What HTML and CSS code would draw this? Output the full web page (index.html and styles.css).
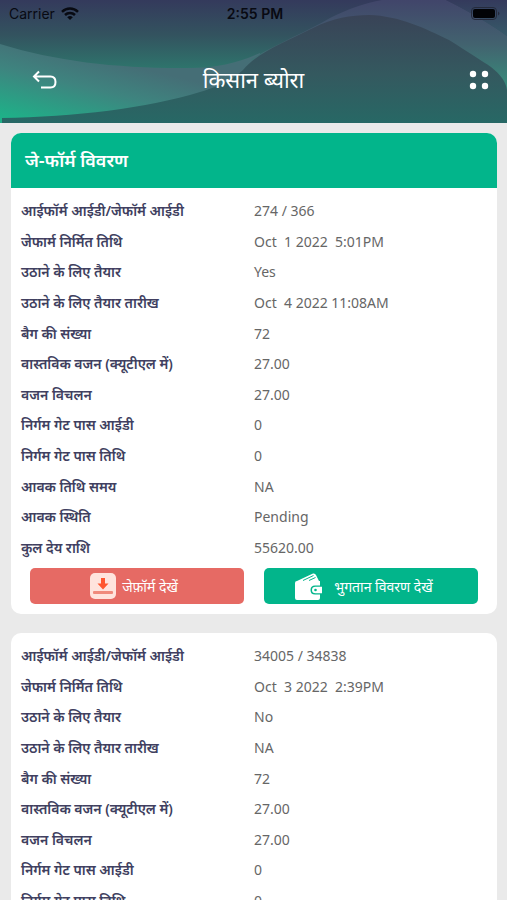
FILE: index.html
```html
<!DOCTYPE html>
<html lang="hi">
<head>
<meta charset="utf-8">
<meta name="viewport" content="width=device-width, initial-scale=1">
<title>किसान ब्योरा</title>
<link rel="stylesheet" href="styles.css">
</head>
<body>
<header class="top">
  <svg class="waves" viewBox="0 0 507 123" preserveAspectRatio="none" aria-hidden="true">
    <defs>
      <linearGradient id="sky" gradientUnits="userSpaceOnUse" x1="0" y1="0" x2="0" y2="70"><stop offset="0" stop-color="#343a5c"/><stop offset=".5" stop-color="#33535f"/><stop offset="1" stop-color="#2e766d"/></linearGradient>
      <linearGradient id="left" gradientUnits="userSpaceOnUse" x1="30" y1="42" x2="12" y2="118"><stop offset="0" stop-color="#456e76"/><stop offset=".4" stop-color="#3e847f"/><stop offset="1" stop-color="#1fb088"/></linearGradient>
      <linearGradient id="back" gradientUnits="userSpaceOnUse" x1="0" y1="0" x2="0" y2="90"><stop offset="0" stop-color="#41456a"/><stop offset=".5" stop-color="#42636f"/><stop offset="1" stop-color="#378f7c"/></linearGradient>
      <linearGradient id="right" gradientUnits="userSpaceOnUse" x1="0" y1="0" x2="0" y2="85"><stop offset="0" stop-color="#343a5c"/><stop offset=".5" stop-color="#37606b"/><stop offset="1" stop-color="#328f78"/></linearGradient>
      <linearGradient id="hill" gradientUnits="userSpaceOnUse" x1="0" y1="15" x2="0" y2="123"><stop offset="0" stop-color="#394357"/><stop offset=".55" stop-color="#34595f"/><stop offset="1" stop-color="#276865"/></linearGradient>
    </defs>
    <path fill="url(#sky)" d="M0 0H507V123H0Z"/>
    <path fill="url(#left)" d="M0 44C55 61 115 68 180 68C215 69 238 63 260 53V123H0Z"/>
    <path fill="url(#back)" d="M250 60C272 46 308 31 330 18C350 8 365 3 382 0H446C472 13 492 25 507 36V100L400 60Z"/>
    <path fill="url(#right)" d="M446 0H507V36C490 24 470 12 446 0Z"/>
    <path fill="url(#hill)" d="M2 118C75 117 147 108 200 92C224 85 234 78 243 70C258 52 285 42 313 28C333 18 351 15 369 15C400 16 424 28 449 40C468 52 482 61 491 67C501 75 506 82 507 90V123H2Z"/>
  </svg>
  <div class="status">
    <span class="carrier">Carrier
      <svg width="18" height="13" viewBox="0 0 18 13" aria-hidden="true"><g fill="none" stroke="#080a12" stroke-width="2.5"><path d="M1 4.800C5.500 .5 12.500 .5 17 4.800"/><path d="M4 8C6.800 5.300 11.200 5.300 14 8"/></g><path fill="#080a12" d="M6.200 10.200Q9 7.800 11.800 10.200L9 13Z"/></svg>
    </span>
    <time class="clock">2:55 PM</time>
    <svg class="battery" width="30" height="14" viewBox="0 0 30 14" aria-hidden="true"><rect x=".5" y=".5" width="25" height="12" rx="3.500" fill="none" stroke="#252b3c"/><rect x="2" y="2" width="22" height="9" rx="2" fill="#020306"/><path d="M27 4.500Q30 6.500 27 8.500Z" fill="#252b3c"/></svg>
  </div>
  <div class="bar">
    <button class="icon-button" type="button" aria-label="वापस"><svg width="26" height="20" viewBox="0 0 26 20" aria-hidden="true"><path d="M7 1.500L2 6.500L7 11.500M2 6.500H18.500Q23.500 6.500 23.500 12Q23.500 17.500 18.500 17.500H9" fill="none" stroke="#fff" stroke-width="2"/></svg></button>
    <h1>किसान ब्योरा</h1>
    <button class="icon-button" type="button" aria-label="मेनू"><svg width="20" height="20" viewBox="0 0 20 20" aria-hidden="true"><g fill="#fff"><circle cx="4" cy="4" r="3.200"/><circle cx="16" cy="4" r="3.200"/><circle cx="4" cy="16" r="3.200"/><circle cx="16" cy="16" r="3.200"/></g></svg></button>
  </div>
</header>
<main class="list">
  <section class="card">
    <h2>जे-फॉर्म विवरण</h2>
    <dl class="details">
      <dt>आईफॉर्म आईडी/जेफॉर्म आईडी</dt><dd>274 / 366</dd>
      <dt>जेफार्म निर्मित तिथि</dt><dd>Oct  1 2022  5:01PM</dd>
      <dt>उठाने के लिए तैयार</dt><dd>Yes</dd>
      <dt>उठाने के लिए तैयार तारीख</dt><dd>Oct  4 2022 11:08AM</dd>
      <dt>बैग की संख्या</dt><dd>72</dd>
      <dt>वास्तविक वजन (क्यूटीएल में)</dt><dd>27.00</dd>
      <dt>वजन विचलन</dt><dd>27.00</dd>
      <dt>निर्गम गेट पास आईडी</dt><dd>0</dd>
      <dt>निर्गम गेट पास तिथि</dt><dd>0</dd>
      <dt>आवक तिथि समय</dt><dd>NA</dd>
      <dt>आवक स्थिति</dt><dd>Pending</dd>
      <dt>कुल देय राशि</dt><dd>55620.00</dd>
    </dl>
    <div class="actions">
      <button class="action view" type="button"><svg width="26" height="26" viewBox="0 0 26 26" aria-hidden="true"><rect width="26" height="26" rx="5" fill="#ffe3dd"/><path d="M11 5H15V10.500H18.500L13 16.500L7.500 10.500H11Z" fill="#ff5630"/><rect x="3" y="18" width="20" height="3" rx="1" fill="#f08a7c"/></svg>जेफ़ॉर्म देखें</button>
      <button class="action pay" type="button"><svg width="27" height="27" viewBox="0 0 27 27" aria-hidden="true"><path d="M2 8L18 .5Q20 0 21 2L24 8H25V25Q25 27 23 27H2Q0 27 0 25V10Q0 8 2 8Z" fill="#fff"/><path d="M8 7.500L18.500 2.500M14 7.500L20.500 4.500" fill="none" stroke="#02b58b"/><path d="M27 12.500H20Q15.500 12.500 15.500 17Q15.500 21.500 20 21.500H27Z" fill="#02b58b"/><path d="M20.500 13.700H27V20.300H20.500Q17 20.300 17 17Q17 13.700 20.500 13.700Z" fill="#fff"/><circle cx="20.500" cy="17" r="1.300" fill="#02b58b"/></svg>भुगतान विवरण देखें</button>
    </div>
  </section>
  <section class="card">
    <dl class="details">
      <dt>आईफॉर्म आईडी/जेफॉर्म आईडी</dt><dd>34005 / 34838</dd>
      <dt>जेफार्म निर्मित तिथि</dt><dd>Oct  3 2022  2:39PM</dd>
      <dt>उठाने के लिए तैयार</dt><dd>No</dd>
      <dt>उठाने के लिए तैयार तारीख</dt><dd>NA</dd>
      <dt>बैग की संख्या</dt><dd>72</dd>
      <dt>वास्तविक वजन (क्यूटीएल में)</dt><dd>27.00</dd>
      <dt>वजन विचलन</dt><dd>27.00</dd>
      <dt>निर्गम गेट पास आईडी</dt><dd>0</dd>
      <dt>निर्गम गेट पास तिथि</dt><dd>0</dd>
      <dt>आवक तिथि समय</dt><dd>NA</dd>
      <dt>आवक स्थिति</dt><dd>Pending</dd>
      <dt>कुल देय राशि</dt><dd>55620.00</dd>
    </dl>
  </section>
</main>
</body>
</html>
```
FILE: styles.css
```css
* { box-sizing: border-box; }

body {
  margin: 0;
  height: 100vh;
  display: flex;
  flex-direction: column;
  background: #eaeaea;
  font-family: "Noto Sans", "Noto Sans Devanagari", sans-serif;
}

h1, h2, dl, dd { margin: 0; }

button {
  border: 0;
  padding: 0;
  background: none;
  font: inherit;
  cursor: pointer;
}

svg { display: block; flex: none; }

.top {
  position: relative;
  flex: none;
  padding-bottom: 10px;
  color: #fff;
}

.waves {
  position: absolute;
  inset: 0;
  width: 100%;
  height: 100%;
}

.status {
  position: relative;
  display: grid;
  grid-template-columns: 1fr auto 1fr;
  align-items: center;
  height: 27px;
  padding: 0 6px 0 9px;
  color: #080a12;
  font: 14px/20px Inter, sans-serif;
}

.carrier { display: flex; align-items: center; gap: 6px; }
.clock { font-weight: 600; }
.battery { justify-self: end; }

.bar {
  position: relative;
  display: grid;
  grid-template-columns: 1fr auto 1fr;
  align-items: center;
  height: 86px;
  padding: 20px 18px 0 32px;
}

.bar h1 {
  padding: 0 14px 2px 0;
  font-size: 22px;
  line-height: 40px;
  font-weight: 400;
}

.icon-button { justify-self: start; }
.icon-button:last-child { justify-self: end; }

.list {
  flex: 1;
  min-height: 0;
  overflow-y: auto;
  scrollbar-width: none;
  display: flex;
  flex-direction: column;
  gap: 19px;
  padding: 10px 10px 10px 11px;
}

.card {
  flex: none;
  overflow: hidden;
  border-radius: 10px;
  background: #fff;
  padding-bottom: 10px;
}

.card h2 {
  padding: 0 14px;
  background: #02b58b;
  color: #fff;
  font-size: 18px;
  line-height: 55px;
  font-weight: 600;
}

.details {
  display: grid;
  grid-template-columns: 1fr 1fr;
  grid-auto-rows: 1fr;
  align-items: center;
  min-height: 380px;
  padding: 8px 10px 5px;
  font-size: 14px;
  line-height: 30px;
}

.details dt { color: #403f60; font-weight: 600; }
.details dd { color: #666; white-space: pre; }

.actions {
  display: grid;
  grid-template-columns: 1fr 1fr;
  gap: 20px;
  padding: 0 19px;
}

.action {
  display: flex;
  align-items: center;
  justify-content: center;
  height: 36px;
  border-radius: 5px;
  color: #fff;
  font-size: 14px;
}

.view { background: #e66a64; gap: 6px; padding-right: 6px; }
.pay { background: #02b58b; gap: 12px; padding-right: 14px; }
```
